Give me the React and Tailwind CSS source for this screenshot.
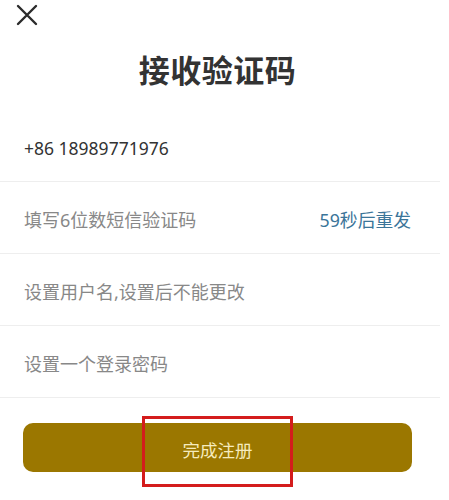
export default function App() {
  const rows = [
    { text: '+86 18989771976', dark: true },
    { text: '填写6位数短信验证码', right: '59秒后重发' },
    { text: '设置用户名,设置后不能更改' },
    { text: '设置一个登录密码' },
  ];

  return (
    <div
      className="w-[449px] h-[500px] bg-white overflow-hidden"
      style={{ fontFamily: '"Noto Sans", "Noto Sans CJK SC", sans-serif' }}
    >
      {/* close */}
      <div className="h-[30px] pl-[16px] pt-[4px]">
        <svg width="22" height="22" viewBox="0 0 22 22">
          <path d="M2 2 L20 20 M20 2 L2 20" stroke="#2b2b2b" strokeWidth="2.4" strokeLinecap="round" />
        </svg>
      </div>

      <h1 className="w-[435px] mt-[20px] text-center text-[31px] leading-[40px] font-bold text-[#333333] tracking-[0.5px]">
        接收验证码
      </h1>

      <div className="mt-[20px] w-[440px]">
        {rows.map((r, i) => (
          <div
            key={i}
            className="h-[72px] flex items-center justify-between border-b border-[#eeeeee] pl-[24px] pr-[29px] pt-[5px]"
          >
            <span className={r.dark ? 'text-[17.5px] text-[#333333]' : 'text-[18px] text-[#888888]'}>
              {r.text}
            </span>
            {r.right && <span className="text-[17.8px] text-[#3b7599]">{r.right}</span>}
          </div>
        ))}
      </div>

      <div className="relative mt-[25px] ml-[23px] w-[389px]">
        <button className="w-full h-[49px] pt-[6px] rounded-[10px] bg-[#9b7700] text-[17.5px] text-[#f6ebbd]">
          完成注册
        </button>
        {/* annotation box */}
        <div className="absolute left-[119px] top-[-7px] w-[151px] h-[71px] border-[3px] border-[#d41c1c]"></div>
      </div>
    </div>
  );
}
